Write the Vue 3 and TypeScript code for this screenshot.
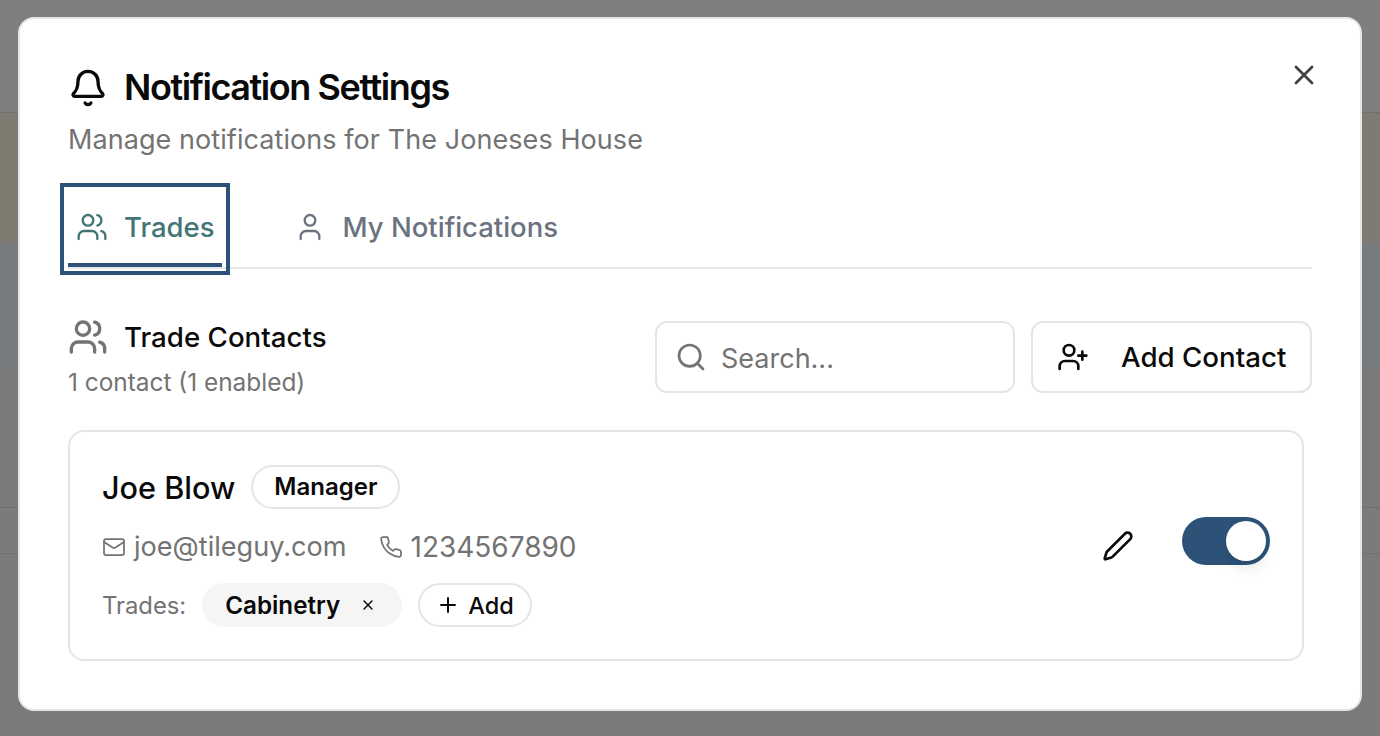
<script setup lang="ts">
const searchText = ''
</script>

<template>
  <div class="page">
    <div class="band band-top"></div>
    <div class="band band-tan"></div>
    <div class="band band-blue"></div>
    <div class="band band-mid"></div>
    <div class="band band-row"></div>
    <div class="band band-rest"></div>
    <div class="overlay"></div>

    <section class="dialog">
      <button class="close" aria-label="Close">
        <svg viewBox="0 0 24 24" class="icon"><path d="M18 6 6 18" /><path d="m6 6 12 12" /></svg>
      </button>

      <header class="head">
        <h2 class="title">
          <svg viewBox="0 0 24 24" class="icon bell">
            <path d="M10.268 21a2 2 0 0 0 3.464 0" />
            <path d="M3.262 15.326A1 1 0 0 0 4 17h16a1 1 0 0 0 .74-1.673C19.41 13.956 18 12.499 18 8A6 6 0 0 0 6 8c0 4.499-1.411 5.956-2.738 7.326" />
          </svg>
          <span class="title-text">Notification Settings</span>
        </h2>
        <p class="subtitle">Manage notifications for The Joneses House</p>
      </header>

      <nav class="tabs">
        <button class="tab active">
          <svg viewBox="0 0 24 24" class="icon tab-icon">
            <path d="M16 21v-2a4 4 0 0 0-4-4H6a4 4 0 0 0-4 4v2" />
            <circle cx="9" cy="7" r="4" />
            <path d="M22 21v-2a4 4 0 0 0-3-3.87" />
            <path d="M16 3.13a4 4 0 0 1 0 7.75" />
          </svg>
          Trades
        </button>
        <button class="tab">
          <svg viewBox="0 0 24 24" class="icon tab-icon">
            <path d="M19 21v-2a4 4 0 0 0-4-4H9a4 4 0 0 0-4 4v2" />
            <circle cx="12" cy="7" r="4" />
          </svg>
          My Notifications
        </button>
      </nav>

      <div class="toolbar">
        <div class="summary">
          <h3 class="summary-title">
            <svg viewBox="0 0 24 24" class="icon summary-icon">
              <path d="M16 21v-2a4 4 0 0 0-4-4H6a4 4 0 0 0-4 4v2" />
              <circle cx="9" cy="7" r="4" />
              <path d="M22 21v-2a4 4 0 0 0-3-3.87" />
              <path d="M16 3.13a4 4 0 0 1 0 7.75" />
            </svg>
            Trade Contacts
          </h3>
          <p class="summary-count">1 contact (1 enabled)</p>
        </div>
        <label class="search">
          <svg viewBox="0 0 24 24" class="icon search-icon"><circle cx="11" cy="11" r="8" /><path d="m21 21-4.3-4.3" /></svg>
          <input :value="searchText" placeholder="Search..." />
        </label>
        <button class="add-contact">
          <svg viewBox="0 0 24 24" class="icon add-icon">
            <path d="M16 21v-2a4 4 0 0 0-4-4H6a4 4 0 0 0-4 4v2" />
            <circle cx="9" cy="7" r="4" />
            <path d="M19 8v6" />
            <path d="M22 11h-6" />
          </svg>
          Add Contact
        </button>
      </div>

      <article class="card">
        <div class="card-main">
          <div class="name-row">
            <span class="name">Joe Blow</span>
            <span class="role">Manager</span>
          </div>
          <div class="contact-row">
            <svg viewBox="0 0 24 24" class="icon contact-icon">
              <rect x="2" y="4" width="20" height="16" rx="2" />
              <path d="m22 7-8.97 5.7a1.94 1.94 0 0 1-2.06 0L2 7" />
            </svg>
            <span class="email">joe@tileguy.com</span>
            <svg viewBox="0 0 24 24" class="icon contact-icon phone">
              <path d="M22 16.92v3a2 2 0 0 1-2.18 2 19.79 19.79 0 0 1-8.63-3.07 19.5 19.5 0 0 1-6-6 19.79 19.79 0 0 1-3.07-8.67A2 2 0 0 1 4.11 2h3a2 2 0 0 1 2 1.72 12.84 12.84 0 0 0 .7 2.81 2 2 0 0 1-.45 2.11L8.09 9.91a16 16 0 0 0 6 6l1.27-1.27a2 2 0 0 1 2.11-.45 12.84 12.84 0 0 0 2.81.7A2 2 0 0 1 22 16.92z" />
            </svg>
            <span>1234567890</span>
          </div>
          <div class="trades-row">
            <span class="trades-label">Trades:</span>
            <span class="trade-chip">
              Cabinetry
              <svg viewBox="0 0 24 24" class="icon chip-x"><path d="M18 6 6 18" /><path d="m6 6 12 12" /></svg>
            </span>
            <button class="trade-add">
              <svg viewBox="0 0 24 24" class="icon plus"><path d="M5 12h14" /><path d="M12 5v14" /></svg>
              Add
            </button>
          </div>
        </div>
        <div class="card-actions">
          <svg viewBox="0 0 24 24" class="icon pencil">
            <path d="M21.174 6.812a1 1 0 0 0-3.986-3.987L3.842 16.174a2 2 0 0 0-.5.83l-1.321 4.352a.5.5 0 0 0 .623.622l4.353-1.32a2 2 0 0 0 .83-.497z" />
          </svg>
          <span class="switch"><span class="thumb"></span></span>
        </div>
      </article>
    </section>
  </div>
</template>

<style scoped>
.page {
  position: relative;
  height: 736px;
  overflow: hidden;
  font-family: Inter, "Noto Sans", sans-serif;
  color: #0a0a0a;
  background: #f6f6f6;
}

.band-top {
  height: 112px;
  background: #ffffff;
  border-bottom: 1px solid #e0e0e0;
}

.band-tan {
  height: 130px;
  background: #fdf7e2;
}

.band-blue {
  height: 125px;
  background: #eef6fb;
}

.band-mid {
  height: 139px;
  background: #f4f4f4;
  border-bottom: 1px solid #dfdfdf;
}

.band-row {
  height: 45px;
  background: #f6f6f6;
  border-bottom: 1px solid #e0e0e0;
}

.overlay {
  position: absolute;
  inset: 0;
  background: rgba(0, 0, 0, 0.5);
}

.dialog {
  position: absolute;
  top: 17px;
  left: 18px;
  box-sizing: border-box;
  width: 1344px;
  height: 694px;
  padding: 49px 48px 0 48px;
  background: #fff;
  border: 2px solid #e5e5e5;
  border-radius: 16px;
}

.icon {
  flex: none;
  fill: none;
  stroke: currentColor;
  stroke-width: 2;
  stroke-linecap: round;
  stroke-linejoin: round;
}

button {
  font: inherit;
  color: inherit;
  background: none;
  border: 0;
  padding: 0;
}

.close {
  position: absolute;
  top: 40px;
  right: 40px;
  display: flex;
  color: #404040;
}

.close .icon {
  width: 32px;
  height: 32px;
}

.title {
  display: flex;
  align-items: center;
  gap: 16px;
  margin: 0;
  height: 40px;
  font-size: 36px;
  line-height: 40px;
  font-weight: 600;
  letter-spacing: -1.43px;
}

.title-text {
  margin-top: -2px;
}

.bell {
  width: 40px;
  height: 40px;
}

.subtitle {
  margin: 16px 0 0;
  font-size: 27px;
  line-height: 32px;
  letter-spacing: 0.07px;
  color: #737373;
}

.tabs {
  display: flex;
  gap: 64px;
  height: 76px;
  margin-top: 35px;
  border-bottom: 2px solid #e5e7eb;
}

.tab {
  display: flex;
  align-items: center;
  gap: 16px;
  box-sizing: border-box;
  height: 76px;
  padding: 0 7px 0 8px;
  border-bottom: 4px solid transparent;
  font-size: 27.5px;
  font-weight: 500;
  color: #6b7280;
}

.tab:last-child {
  gap: 17px;
}

.tab.active {
  color: #427575;
  border-bottom-color: #2c5278;
  outline: 4px solid #2c5278;
  outline-offset: 4px;
}

.tab-icon {
  width: 32px;
  height: 32px;
  stroke-width: 1.75;
}

.toolbar {
  display: flex;
  align-items: flex-start;
  gap: 16px;
  margin-top: 52px;
}

.summary {
  flex: 1;
  margin-top: -4px;
}

.summary-title {
  display: flex;
  align-items: center;
  gap: 16px;
  margin: 0;
  font-size: 27.7px;
  line-height: 36px;
  font-weight: 500;
}

.summary-icon {
  width: 40px;
  height: 40px;
  color: #737373;
}

.summary-count {
  margin: 9px 0 0;
  font-size: 24.4px;
  line-height: 32px;
  color: #737373;
}

.search {
  display: flex;
  align-items: center;
  gap: 14px;
  box-sizing: border-box;
  width: 360px;
  height: 72px;
  padding: 0 18px;
  border: 2px solid #e5e5e5;
  border-radius: 12px;
}

.search-icon {
  width: 32px;
  height: 32px;
  color: #737373;
}

.search input {
  flex: 1;
  min-width: 0;
  border: 0;
  outline: 0;
  padding: 2px 0 0;
  font: inherit;
  font-size: 27px;
}

.search input::placeholder {
  color: #737373;
  opacity: 1;
}

.add-contact {
  display: flex;
  align-items: center;
  gap: 32px;
  box-sizing: border-box;
  width: 281px;
  height: 72px;
  padding: 0 24px;
  border: 2px solid #e5e5e5;
  border-radius: 12px;
  font-size: 27.7px;
  font-weight: 500;
  white-space: nowrap;
}

.add-icon {
  width: 32px;
  height: 32px;
}

.card {
  display: flex;
  align-items: center;
  justify-content: space-between;
  box-sizing: border-box;
  width: 1236px;
  height: 231px;
  margin-top: 32px;
  padding: 0 32px;
  border: 2px solid #e5e5e5;
  border-radius: 16px;
}

.name-row,
.contact-row,
.trades-row {
  display: flex;
  align-items: center;
}

.name-row {
  gap: 16px;
}

.name {
  margin-top: 2px;
  font-size: 30.6px;
  line-height: 44px;
  font-weight: 500;
}

.role {
  box-sizing: border-box;
  height: 44px;
  padding: 0 21px;
  border: 2px solid #e5e5e5;
  border-radius: 22px;
  font-size: 24px;
  line-height: 40px;
  font-weight: 600;
}

.contact-row {
  margin-top: 15px;
  font-size: 28px;
  line-height: 44px;
  color: #737373;
}

.email {
  font-size: 27.1px;
}

.contact-icon {
  width: 24px;
  height: 24px;
  margin-right: 8px;
  stroke-width: 1.75;
}

.phone {
  margin-left: 32px;
}

.trades-row {
  margin-top: 14px;
  gap: 16px;
}

.trades-label {
  font-size: 23.8px;
  color: #737373;
}

.trade-chip {
  display: flex;
  align-items: center;
  gap: 20px;
  box-sizing: border-box;
  height: 44px;
  padding: 0 26px 0 23px;
  background: #f5f5f5;
  border-radius: 22px;
  font-size: 24.2px;
  font-weight: 600;
}

.chip-x {
  width: 16px;
  height: 16px;
}

.trade-add {
  display: flex;
  align-items: center;
  gap: 8px;
  box-sizing: border-box;
  height: 44px;
  padding: 0 16px;
  border: 2px solid #e5e5e5;
  border-radius: 22px;
  font-size: 23.5px;
  font-weight: 450;
}

.plus {
  width: 24px;
  height: 24px;
}

.card-actions {
  display: flex;
  align-items: center;
  gap: 48px;
}

.pencil {
  width: 32px;
  height: 32px;
}

.switch {
  display: flex;
  align-items: center;
  justify-content: flex-end;
  box-sizing: border-box;
  width: 88px;
  height: 48px;
  margin-top: -9px;
  padding: 4px;
  background: #2c5278;
  border-radius: 24px;
}

.thumb {
  width: 40px;
  height: 40px;
  background: #fff;
  border-radius: 50%;
  box-shadow: 0 10px 15px -3px rgba(0, 0, 0, 0.1);
}
</style>

<style>
html,
body {
  margin: 0;
  background: #f6f6f6;
}
</style>
